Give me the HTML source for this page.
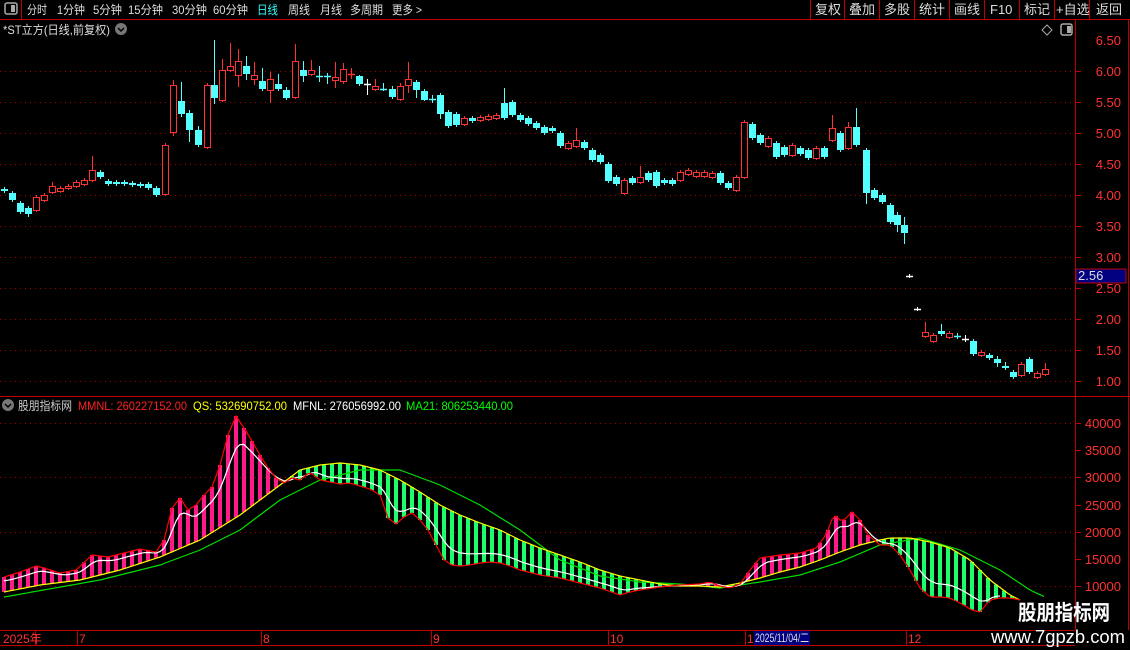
<!DOCTYPE html>
<html><head><meta charset="utf-8"><style>
body{margin:0;background:#000;width:1130px;height:650px;overflow:hidden;font-family:"Liberation Sans","Noto Sans CJK SC",sans-serif}
svg{position:absolute;left:0;top:0}
</style></head><body>
<svg id="s" width="1130" height="650" xmlns="http://www.w3.org/2000/svg" font-family="Liberation Sans, Noto Sans CJK SC, sans-serif">
<rect width="1130" height="650" fill="#000"/>
<!-- toolbar -->
<line x1="0" y1="19.5" x2="1130" y2="19.5" stroke="#c00000"/>
<line x1="21.5" y1="0" x2="21.5" y2="19" stroke="#c00000"/>
<rect x="5" y="3" width="12" height="11" rx="2" fill="none" stroke="#aaa" stroke-width="1.5"/><rect x="11" y="5" width="4" height="7" fill="#aaa"/>
<g font-size="12" fill="#ddd" lengthAdjust="spacingAndGlyphs">
<text x="27" y="14" textLength="20" lengthAdjust="spacingAndGlyphs">分时</text><text x="57" y="14" textLength="28" lengthAdjust="spacingAndGlyphs">1分钟</text><text x="93" y="14" textLength="29" lengthAdjust="spacingAndGlyphs">5分钟</text><text x="128" y="14" textLength="35" lengthAdjust="spacingAndGlyphs">15分钟</text><text x="172" y="14" textLength="35" lengthAdjust="spacingAndGlyphs">30分钟</text><text x="213" y="14" textLength="35" lengthAdjust="spacingAndGlyphs">60分钟</text><text x="257" y="14" fill="#33ffff" textLength="21" lengthAdjust="spacingAndGlyphs">日线</text><text x="288" y="14" textLength="22" lengthAdjust="spacingAndGlyphs">周线</text><text x="320" y="14" textLength="22" lengthAdjust="spacingAndGlyphs">月线</text><text x="350" y="14" textLength="33" lengthAdjust="spacingAndGlyphs">多周期</text><text x="392" y="14" textLength="30" lengthAdjust="spacingAndGlyphs">更多 &gt;</text>
</g>
<g stroke="#c00000"><line x1="810.5" y1="0" x2="810.5" y2="19"/><line x1="844.5" y1="0" x2="844.5" y2="19"/><line x1="879.5" y1="0" x2="879.5" y2="19"/><line x1="914.5" y1="0" x2="914.5" y2="19"/><line x1="949.5" y1="0" x2="949.5" y2="19"/><line x1="984.5" y1="0" x2="984.5" y2="19"/><line x1="1019.5" y1="0" x2="1019.5" y2="19"/><line x1="1054.5" y1="0" x2="1054.5" y2="19"/><line x1="1089.5" y1="0" x2="1089.5" y2="19"/></g>
<g font-size="13" fill="#ddd"><text x="815" y="14">复权</text><text x="849" y="14">叠加</text><text x="884" y="14">多股</text><text x="919" y="14">统计</text><text x="954" y="14">画线</text><text x="990" y="14">F10</text><text x="1024" y="14">标记</text><text x="1056" y="14">+自选</text><text x="1096" y="14">返回</text></g>
<text x="3" y="34" font-size="12" fill="#ddd" textLength="107" lengthAdjust="spacingAndGlyphs">*ST立方(日线,前复权)</text>
<circle cx="121" cy="29" r="6" fill="#777"/><path d="M118 28l3 3 3-3" stroke="#000" stroke-width="1.5" fill="none"/>
<path d="M1047 25l5 5-5 5-5-5z" fill="none" stroke="#aaa"/>
<rect x="1061" y="24" width="11" height="11" rx="2" fill="none" stroke="#aaa" stroke-width="1.5"/><rect x="1067" y="26" width="4" height="7" fill="#aaa"/>
<!-- axes -->
<line x1="1075.5" y1="20" x2="1075.5" y2="630" stroke="#c00000"/>
<line x1="1128.5" y1="20" x2="1128.5" y2="630" stroke="#c00000"/>
<line x1="0" y1="396.5" x2="1130" y2="396.5" stroke="#c00000"/>
<line x1="0" y1="630.5" x2="1075" y2="630.5" stroke="#c00000"/>
<line x1="0" y1="645.5" x2="1075" y2="645.5" stroke="#c00000"/>
<g id="g"></g>
<g font-size="13" fill="#ff3232" text-anchor="end">
<text x="1121" y="45">6.50</text><text x="1121" y="76">6.00</text><text x="1121" y="107">5.50</text><text x="1121" y="138">5.00</text><text x="1121" y="169">4.50</text><text x="1121" y="200">4.00</text><text x="1121" y="231">3.50</text><text x="1121" y="262">3.00</text><text x="1121" y="293">2.50</text><text x="1121" y="324">2.00</text><text x="1121" y="355">1.50</text><text x="1121" y="386">1.00</text>
<text x="1121" y="428">40000</text><text x="1121" y="455">35000</text><text x="1121" y="482">30000</text><text x="1121" y="510">25000</text><text x="1121" y="537">20000</text><text x="1121" y="564">15000</text><text x="1121" y="591">10000</text>
</g>
<rect x="1076" y="269" width="50" height="14" fill="#000080" stroke="#c00000"/>
<text x="1078" y="280" font-size="13" fill="#ddd">2.56</text>
<!-- indicator label -->
<circle cx="8" cy="405" r="6" fill="#777"/><path d="M5 404l3 3 3-3" stroke="#000" stroke-width="1.5" fill="none"/>
<g font-size="12">
<text x="18" y="410" fill="#ccc" textLength="54" lengthAdjust="spacingAndGlyphs">股朋指标网</text>
<text x="78" y="410" fill="#ff2020" textLength="109" lengthAdjust="spacingAndGlyphs">MMNL: 260227152.00</text>
<text x="193" y="410" fill="#ffff00" textLength="94" lengthAdjust="spacingAndGlyphs">QS: 532690752.00</text>
<text x="293" y="410" fill="#fff" textLength="108" lengthAdjust="spacingAndGlyphs">MFNL: 276056992.00</text>
<text x="406" y="410" fill="#00ff00" textLength="107" lengthAdjust="spacingAndGlyphs">MA21: 806253440.00</text>
</g>
<!-- date axis -->
<g stroke="#c00000"><line x1="35.5" y1="630" x2="35.5" y2="645"/><line x1="77.5" y1="630" x2="77.5" y2="645"/><line x1="261.5" y1="630" x2="261.5" y2="645"/><line x1="431.5" y1="630" x2="431.5" y2="645"/><line x1="608.5" y1="630" x2="608.5" y2="645"/><line x1="745.5" y1="630" x2="745.5" y2="645"/><line x1="906.5" y1="630" x2="906.5" y2="645"/></g>
<g font-size="12" fill="#ff3232"><text x="3" y="643">2025年</text><text x="79" y="643">7</text><text x="263" y="643">8</text><text x="433" y="643">9</text><text x="610" y="643">10</text><text x="747" y="643">1</text><text x="908" y="643">12</text></g>
<rect x="754" y="631" width="56" height="14" fill="#000080"/>
<text x="755" y="642" font-size="12" fill="#ddd" textLength="54" lengthAdjust="spacingAndGlyphs">2025/11/04/二</text>
<text x="1018" y="620" font-size="21" font-weight="bold" fill="#fff" textLength="92" lengthAdjust="spacingAndGlyphs">股朋指标网</text>
<text x="991" y="643" font-size="18" fill="#fff" textLength="134" lengthAdjust="spacingAndGlyphs">www.7gpzb.com</text>
</svg>
<script>
const G=document.getElementById('g');
let h='';
for(let p=6;p>=1;p-=0.5){let y=Math.round(40+(6.5-p)*62)+0.5;h+=`<line x1="0" y1="${y}" x2="1075" y2="${y}" stroke="#a00000" stroke-dasharray="1 4"/><line x1="1075" y1="${y}" x2="1081" y2="${y}" stroke="#c00000"/>`;}
[423,477,532,586].forEach(y=>{h+=`<line x1="0" y1="${y+.5}" x2="1075" y2="${y+.5}" stroke="#a00000" stroke-dasharray="1 4"/>`});
[423,450,477,505,532,559,586].forEach(y=>{h+=`<line x1="1075" y1="${y+.5}" x2="1081" y2="${y+.5}" stroke="#c00000"/>`});
const C=[[4,189,191,'c'],[12,193,200,'c'],[20,203,212,'c'],[28,208,214,'c',0,217],[36,197,210,'r'],[44,195,200,'r'],[52,186,192,'r',182],[60,188,191,'r'],[68,186,188,'r'],[76,182,186,'r'],[84,180,184,'r'],[92,170,180,'r',156],[100,172,177,'c'],[108,181,184,'c'],[116,182,184,'c'],[124,182,184,'c'],[132,183,185,'c'],[140,184,186,'c'],[148,184,188,'c'],[156,188,195,'c'],
[165,145,194,'r'],[173,85,132,'r',80,136],[181,101,114,'c',82,117],[189,113,130,'c',110,142],[198,130,145,'c',126],[207,85,147,'r'],[214,85,98,'c',40,104],[222,70,100,'r',59],[230,66,70,'r',43],[238,61,75,'r',49,87],[246,66,74,'c',56,80],[254,75,79,'r',62,85],[262,81,89,'c',68],[270,79,90,'r',72,103],[278,84,89,'c',74],[286,90,98,'c',87,100],[295,61,97,'r',44],[303,70,76,'c',61,82],[311,70,74,'r',60],[319,76,77,'c',66,82],[327,76,77,'c',73,84],[335,77,80,'r',62,88],[343,69,81,'r',63,84],[351,74,75,'r',68,79],[359,76,84,'c',75],[367,84,85,'w',79,95],[375,86,89,'r',79],[383,89,90,'c',83,91],[392,89,97,'c',86,99],[400,86,99,'r',83,101],[408,79,85,'r',62,93],[416,82,90,'c',80,98],[424,91,100,'c',89,101],[432,99,100,'c',95,103],[440,95,114,'c',93,119],[448,112,126,'c',110,128],
[456,114,125,'c'],[464,118,124,'r'],[472,118,121,'c'],[480,117,120,'r'],[488,116,119,'r'],[496,115,118,'r'],[504,103,118,'c',88],[512,102,115,'c'],[520,115,120,'c'],[528,118,124,'c'],[536,123,128,'c'],[544,127,133,'c'],[552,128,131,'c'],[560,133,146,'c'],[568,143,148,'r'],[576,140,146,'r',128],[584,142,148,'c'],[592,150,160,'c'],[600,155,162,'c'],[608,164,181,'c'],[616,177,184,'c'],[624,180,193,'r'],[632,178,183,'c'],[640,177,182,'r',166],[648,173,180,'c'],[656,172,186,'c'],[664,180,183,'c'],[672,180,184,'c'],[680,172,180,'r'],[688,170,174,'r'],[696,172,176,'r'],[704,172,176,'r'],[712,173,177,'r'],[720,173,183,'c'],[728,183,188,'c'],[736,177,190,'r'],[744,122,177,'r'],[752,124,138,'c'],[760,135,143,'c'],[768,138,146,'r'],[776,143,157,'c'],[784,147,155,'c'],[792,145,155,'r'],[800,148,154,'c'],[808,150,158,'c'],[816,148,158,'r'],[824,148,157,'c'],[832,128,140,'r',115],[840,133,150,'c'],[848,127,148,'r',122],[856,127,145,'c',108],[866,150,193,'c',148,204],[874,190,198,'c'],[882,195,202,'c'],[890,205,222,'c'],[897,215,225,'c',212,232],[904,225,233,'c',217,244],
[909,276,276,'w'],[917,309,309,'w'],[925,332,336,'r',322],[933,335,341,'r'],[941,331,334,'c',324],[949,333,337,'r'],[957,336,337,'c',333,339],[965,339,340,'w',335],[973,341,354,'c'],[981,352,355,'r'],[989,355,358,'c'],[997,359,363,'c',356,367],[1005,366,368,'c',362],[1013,372,377,'c'],[1021,364,375,'r'],[1029,359,372,'c',357],[1037,373,377,'r'],[1045,369,374,'r',363]];
C.forEach(([x,t,b,k,hi,lo])=>{hi=hi||t-2;lo=lo||b+2;const col=k=='r'?'#ff3232':k=='c'?'#54ffff':'#fff';
h+=`<line x1="${x+.5}" y1="${hi}" x2="${x+.5}" y2="${lo}" stroke="${col}"/>`;
if(b-t<=1){h+=`<line x1="${x-3}" y1="${t+.5}" x2="${x+4}" y2="${t+.5}" stroke="${col}" stroke-width="1.5"/>`;}
else if(k=='r')h+=`<rect x="${x-2.5}" y="${t+.5}" width="6" height="${b-t}" fill="#000" stroke="${col}"/>`;
else h+=`<rect x="${x-3}" y="${t}" width="7" height="${b-t}" fill="${col}"/>`;});
function interp(P,x){if(x<=P[0][0])return P[0][1];for(let i=1;i<P.length;i++){if(x<=P[i][0]){const[a,ya]=P[i-1],[b,yb]=P[i];return ya+(yb-ya)*(x-a)/(b-a);}}return P[P.length-1][1];}
const R=[[4,577],[20,572],[36,566],[44,568],[60,573],[76,570],[92,555],[108,557],[124,553],[140,549],[156,552],[164,540],[172,508],[180,498],[188,510],[196,505],[204,495],[212,487],[220,465],[228,435],[236,416],[244,428],[252,441],[260,455],[268,468],[276,478],[284,483],[292,478],[300,480],[310,472],[320,480],[330,482],[340,484],[350,483],[360,486],[370,489],[380,495],[388,518],[396,524],[404,517],[412,513],[420,520],[428,530],[436,545],[444,560],[452,565],[460,566],[470,565],[480,563],[490,562],[500,563],[510,566],[520,570],[540,575],[560,578],[580,583],[600,588],[620,595],[630,592],[640,590],[660,587],[680,585],[700,584],[710,582],[720,586],[730,588],[740,584],[750,570],[760,558],[780,555],[800,553],[816,548],[826,535],[834,514],[842,522],[852,512],[860,520],[868,535],[880,545],[890,545],[900,555],[910,570],[920,588],[930,597],[940,597],[950,598],[960,603],[972,610],[980,612],[990,600],[1000,598],[1010,598],[1020,600]];
const Y=[[4,592],[40,585],[80,580],[120,570],[160,557],[200,540],[240,515],[280,485],[300,470],[320,465],[340,463],[360,465],[380,470],[400,480],[420,492],[440,505],[460,515],[480,523],[500,530],[520,540],[540,548],[560,555],[580,562],[600,570],[620,576],[640,580],[660,584],[680,586],[700,586],[720,587],[740,583],[760,578],[780,572],[800,567],[820,560],[840,552],[860,545],[880,540],[890,538],[910,538],[930,542],[950,548],[970,560],[990,580],[1010,595],[1020,600]];
const M=[[4,597],[100,580],[160,565],[200,550],[240,530],[280,500],[320,480],[360,470],[400,470],[440,485],[480,505],[520,530],[560,560],[600,576],[640,582],[680,584],[720,588],[760,582],[800,575],[840,562],[880,545],[920,538],[960,550],[1000,570],[1030,590],[1045,597]];
for(let x=4;x<=1020;x+=8){const r=interp(R,x),y=interp(Y,x);const top=Math.min(r,y),bot=Math.max(r,y);
h+=`<rect x="${x-2}" y="${top}" width="4" height="${bot-top}" fill="${r<y?'#ff1a8c':'#1aff6a'}"/>`;}
function pl(P,col,x0,x1,f){let pts=[];for(let x=x0;x<=x1;x+=4)pts.push(x+','+(f?f(x):interp(P,x)).toFixed(1));return `<polyline points="${pts.join(' ')}" fill="none" stroke="${col}" stroke-width="1.2"/>`;}
h+=pl(M,'#00e000',4,1045);
h+=pl(Y,'#ffff00',4,1020);
h+=pl(null,'#fff',4,1000,x=>{let s=0,n=0;for(let d=-8;d<=0;d+=4){s+=interp(R,x+d);n++;}return 0.75*s/n+0.25*interp(Y,x);});
h+=pl(R,'#ff0000',4,1020);
G.innerHTML=h;
</script>
</body></html>
